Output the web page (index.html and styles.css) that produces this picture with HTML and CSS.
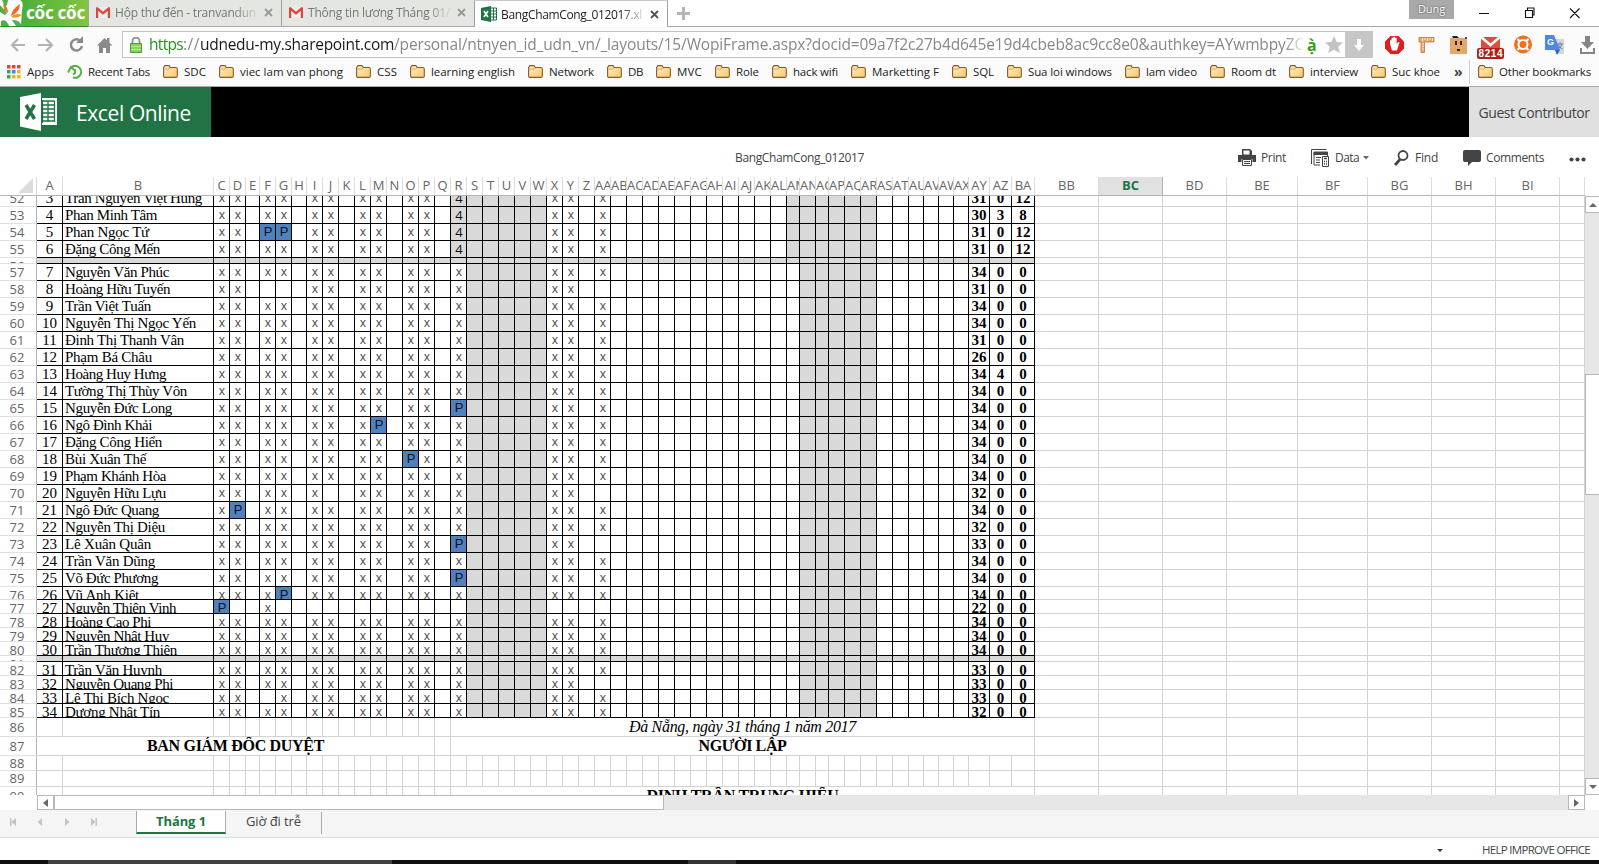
FILE: index.html
```html
<!DOCTYPE html>
<html lang="vi">
<head>
<meta charset="utf-8">
<title>BangChamCong_012017.xlsx</title>
<link rel="stylesheet" href="styles.css">
</head>
<body>
<svg class="defs" width="0" height="0">
  <linearGradient id="fold" x1="0" y1="0" x2="1" y2="1"><stop offset="0" stop-color="#fff0c4"/><stop offset="1" stop-color="#fbc56d"/></linearGradient>
  <symbol id="gmail" viewBox="0 0 14 11"><path d="M1 0h12v11H1z" fill="#ececec"/><path d="M0 1.4Q0 0 1.4 0L7 4.7 12.600 0Q14 0 14 1.400V11h-2.200V3.700L7 7.700 2.200 3.700V11H0z" fill="#d9483b"/></symbol>
  <symbol id="folder" viewBox="0 0 15 13"><path d="M.6 11V2.500L2 .6h4l1.300 1.900h5.500q1.500 0 1.500 1.500v7q0 1.400-1.400 1.400H2Q.6 12.400.6 11z" fill="url(#fold)" stroke="#8a5a2a" stroke-width="1.100"/><path d="M1.200 4h5l1-1" fill="none" stroke="#d09a50" stroke-width=".8"/></symbol>
  <symbol id="close" viewBox="0 0 9 9"><path d="M1 1l7 7M8 1L1 8" stroke="currentColor" stroke-width="1.900" fill="none"/></symbol>
</svg>

<header class="tabstrip">
  <div class="brand">
    <svg width="23" height="26" viewBox="0 0 23 26"><path d="M0 0h20q4 2 2 10l-1 16H0z" fill="#fff"/><path d="M2 0h6l-1 5-2 2z" fill="#4db048"/><path d="M0 5l7 8-2 2-5-3z" fill="#4db048"/><path d="M3 4q5 2 5 9l-4-3z" fill="#f07c22"/><path d="M20 4q0 8-9 12 1-7 9-12z" fill="#f26a21"/><path d="M22 15q-5 4-11 2 4-5 11-2z" fill="#f7941d"/><path d="M1 26v-5q5-3 8 5zM12 20q7-1 10 6h-6z" fill="#4db048"/></svg>
    <span class="brandname" data-w="59">cốc cốc</span>
  </div>
  <div class="tab"><svg width="14" height="11"><use href="#gmail"/></svg><span class="ttl"><b data-w="141">Hộp thư đến - tranvandun</b></span><svg class="x" width="9" height="9"><use href="#close"/></svg></div>
  <div class="tab"><svg width="14" height="11"><use href="#gmail"/></svg><span class="ttl"><b data-w="142">Thông tin lương Tháng 01/</b></span><svg class="x" width="9" height="9"><use href="#close"/></svg></div>
  <div class="tab on"><svg width="16" height="16" viewBox="0 0 16 16"><path d="M9 2h6.500v12H9z" fill="#fff" stroke="#217346"/><path d="M10 5h5M10 8h5M10 11h5M12.500 2v12" stroke="#217346"/><path d="M0 2l10-2v16L0 14z" fill="#217346"/><path d="M3 5l4 6M7 5l-4 6" stroke="#fff" stroke-width="1.600"/></svg><span class="ttl"><b data-w="141">BangChamCong_012017.xl</b></span><svg class="x" width="9" height="9"><use href="#close"/></svg></div>
  <svg class="plus" width="13" height="13"><path d="M6.500 0v13M0 6.500h13" stroke="#b4b4b4" stroke-width="3"/></svg>
  <div class="user" ><span data-w="27">Dung</span></div>
  <svg class="win" width="102" height="12" fill="none" stroke="#111" stroke-width="1.100"><path d="M0 6.500h10M46.500 3.500h7v7h-7zM48.500 3v-2h6.500v7h-1.500M91 1.500l9.500 9.500M100.500 1.500L91 11"/></svg>
</header>

<section class="navbar">
  <svg class="navicons" width="102" height="18" fill="none"><g stroke="#b3b3b3" stroke-width="2.200"><path d="M15 9H2M8 3L2 9l6 6M28 9h14M36 3l6 6-6 6"/></g><path d="M70 4.500a5.600 5.600 0 1 0 2 5.500" stroke="#8a8a8a" stroke-width="2.500"/><path d="M66 7h7V0z" fill="#8a8a8a"/><path d="M87 9.500L94.500 2l2.500 2.300V2h2.500v4.800l3 2.700h-2.500V17h-4v-5h-3v5h-4V9.500z" fill="#8a8a8a"/></svg>
  <div class="url">
    <svg width="12" height="16" viewBox="0 0 12 16"><path d="M2.500 7V4a3.500 3.500 0 0 1 7 0v3" fill="none" stroke="#8e8e8e" stroke-width="1.800"/><path d="M.5 6.500h11v9H.5z" fill="#8bd25c" stroke="#4f9a33"/><path d="M1 9.500h10M1 12.500h10" stroke="#b5e796"/></svg>
    <div class="addr"><span class="sec" data-w="34">https</span><span data-w="17">://</span><span class="host" data-w="194">udnedu-my.sharepoint.com</span><span data-w="910">/personal/ntnyen_id_udn_vn/_layouts/15/WopiFrame.aspx?docid=09a7f2c27b4d645e19d4cbeb8ac9cc8e0&amp;authkey=AYwmbpyZC</span></div>
    <span class="viet">ạ̀</span>
    <svg width="18" height="17" viewBox="0 0 18 17"><path d="M9 0l2.700 5.900 6.300.6-4.700 4.200 1.400 6.300L9 13.700 3.300 17l1.400-6.300L0 6.500l6.300-.6z" fill="#c3c3c3"/></svg>
    <div class="dl"><svg width="10" height="12"><path d="M3 0h4v6h3l-5 6-5-6h3z" fill="#fff"/></svg></div>
  </div>
  <svg class="exts" width="213" height="27" viewBox="0 0 213 27">
    <path d="M5.500 5h8l5.500 5.500v7L13.500 23h-8L0 17.500v-7z" fill="#df1f1f"/><path d="M5 13V9.500q1-1 1.500 0V7q1-1.200 1.700 0V6q1-1.200 1.800 0v1q1-1 1.700 0v6l1.500-2q1.400-.4 1.200.8L12 19.500H7z" fill="#fff"/>
    <path d="M34 6.500h15V11h-9.500v10.500H36V11h-2z" fill="#e3a868" stroke="#b07a42" stroke-width=".8"/><path d="M37.500 7v3M40 7v2M42.500 7v3M45 7v2M47.500 7v3M37 13h2M37 15.500h2M37 18h2" stroke="#fff0d0" stroke-width=".9"/>
    <path d="M65 7h17v16H65z" fill="#e5a86b"/><path d="M67 5h5l2 2h-6z" fill="#14213d"/><path d="M70 10h2v4h-2zM75 10h2v4h-2zM72 18h3v2h-3z" fill="#3a2413"/><path d="M80 6h2v2h-2z" fill="#35508f"/>
    <path d="M96 6h19v14H96z" fill="#e04b3d"/><path d="M96 6l9.500 8L115 6" fill="none" stroke="#fff" stroke-width="2.500"/><rect x="92" y="17" width="27" height="11" rx="2" fill="#ad2018"/>
    <text class="badge" x="93.500" y="26" textLength="24">8214</text>
    <circle cx="138" cy="13.500" r="9" fill="#f0701f"/><circle cx="138" cy="13.500" r="4.500" fill="none" stroke="#fff" stroke-width="2"/><path d="M132.500 8l2.500 2.500M143.500 8L141 10.500M132.500 19l2.500-2.500M143.500 19l-2.500-2.500" stroke="#fff" stroke-width="2"/>
    <path d="M168 8h11v15h-8z" fill="#d6d6d6"/><path d="M160 4h9l6 15h-15z" fill="#4a86ee"/><path d="M170 19h5l-3 5z" fill="#2f62c0"/><text class="gt" x="162" y="14">G</text><path d="M172 13h6M175 11.500v1.500M173 18q3-2 4-5M173.500 14q1 3 4 4" stroke="#6d7f8c" fill="none"/>
    <path d="M200 5h5v6h4l-6.500 7-6.500-7h4zM195 17h2v4h11v-4h2v6h-15z" fill="#858585"/>
  </svg>
</section>

<nav class="bookmarks" id="bookmarks">
  <span class="bm apps"><svg width="14" height="14"><path d="M0 0h3.500v3.500H0zM5 0h3.500v3.500H5zM10 0h3.500v3.500H10z" fill="#e8453c"/><path d="M0 5h3.500v3.500H0z" fill="#3aa757"/><path d="M5 5h3.500v3.500H5z" fill="#4285f4"/><path d="M10 5h3.500v3.500H10zM5 10h3.500v3.500H5zM10 10h3.500v3.500H10z" fill="#f5b31a"/><path d="M0 10h3.500v3.500H0z" fill="#3aa757"/></svg><b data-w="27">Apps</b></span>
  <span class="bm"><svg width="15" height="14" fill="none" stroke="#4fae3c" stroke-width="1.900"><path d="M4 2.500A6 6 0 1 1 6 12.500M1 7.500L4 2l3 3M8 4v4l-2 1.500"/></svg><b data-w="62">Recent Tabs</b></span>
</nav>

<section class="suite">
  <div class="app">
    <svg width="37" height="38" viewBox="0 0 37 38"><path d="M22 5h15v27H22z" fill="#fff"/><path d="M23 8h11.500M23 12h11.500M23 16h11.500M23 20h11.500M23 24h11.500M23 28h11.500" stroke="#217346" stroke-width="1.300"/><path d="M28 8v21M22.500 7v23M34.500 8v21" stroke="#217346" stroke-width="1.300"/><path d="M0 4l21-4v38L0 33.500z" fill="#fff"/><path d="M6 12l8.500 14M14.500 12L6 26" stroke="#217346" stroke-width="3.400"/></svg>
    <span data-w="115">Excel Online</span>
  </div>
  <div class="guest"><span data-w="111">Guest Contributor</span></div>
</section>

<section class="cmdbar">
  <div class="fname"><span data-w="129">BangChamCong_012017</span></div>
  <div class="cmd"><svg width="18" height="17"><path d="M4 0h8l2 2v4H4zM0 6h18v7h-3.500v-3h-11v3H0z" fill="#444"/><path d="M5.500 1.500h6v4h-6z" fill="#fff"/><path d="M4.500 10.500h9v6h-9z" fill="#fff" stroke="#444"/><path d="M6 12.500h6M6 14.500h6" stroke="#444"/></svg><span data-w="25">Print</span></div>
  <div class="cmd data"><svg width="19" height="18" fill="none" stroke="#444"><path d="M.5 15V.500h15M3 16V3h13.500v4M3 16h6" /><path d="M3 3.500h13v2H3z" fill="#444"/><path d="M5 8.500h5M5 11h4M5 13.500h4"/><path d="M11.500 7.500h6v10h-6z" fill="#fff"/><path d="M13 9.500h3M13 12.500h1M15 12.500h1M13 15h1M15 15h1" stroke-width="1.400"/></svg><span data-w="24">Data</span><svg class="car" width="6" height="4"><path d="M0 0h6L3 3.500z" fill="#666"/></svg></div>
  <div class="cmd find"><svg width="15" height="16" fill="none" stroke="#444"><circle cx="9" cy="5.500" r="4.500" stroke-width="1.800"/><path d="M6 9.500L1 15" stroke-width="2.800"/></svg><span data-w="23">Find</span></div>
  <div class="cmd comm"><svg width="18" height="16"><path d="M2 0h14q2 0 2 2v8q0 2-2 2H9l-4 4v-4H2q-2 0-2-2V2q0-2 2-2z" fill="#444"/></svg><span data-w="58">Comments</span></div>
  <svg class="dots" width="17" height="5" fill="#444"><circle cx="2.500" cy="2.500" r="2.100"/><circle cx="8.500" cy="2.500" r="2.100"/><circle cx="14.500" cy="2.500" r="2.100"/></svg>
</section>

<main class="work">
  <div class="sheet">
    <div class="row heads" id="heads"></div>
    <div class="body" id="body"></div>
    <div class="hscroll">
      <i class="btn"><svg width="5" height="8"><path d="M5 0v8L0 4z" fill="#666"/></svg></i><i class="thumb"></i><i class="track"></i><i class="btn"><svg width="5" height="8"><path d="M0 0v8l5-4z" fill="#666"/></svg></i>
    </div>
  </div>
  <div class="vscroll">
    <i class="btn"><svg width="8" height="4"><path d="M4 0l4 4H0z" fill="#666"/></svg></i><i class="t1"></i><i class="thumb"></i><i class="track"></i><i class="btn"><svg width="8" height="4"><path d="M0 0h8L4 4z" fill="#666"/></svg></i>
  </div>
</main>

<footer class="sheets">
  <svg class="pager" width="97" height="8" fill="#c3c3c3"><path d="M10 0h1.500v8H10zM16 0v8l-4.500-4zM42 0v8l-4.500-4zM65 0v8l4.500-4zM91 0v8l4.500-4zM95.500 0H97v8h-1.500z"/></svg>
  <div class="sh on"><span data-w="50">Tháng 1</span></div>
  <div class="sh"><span data-w="55">Giờ đi trễ</span></div>
</footer>
<div class="status"><svg width="6" height="3"><path d="M0 0h6L3 3z" fill="#333"/></svg><span data-w="108">HELP IMPROVE OFFICE</span></div>
<div class="taskbar"><i></i><i></i></div>
<script src="app.js"></script>
</body>
</html>
```

FILE: styles.css
```css
* { box-sizing: border-box; }
body { margin: 0; width: 1599px; height: 864px; overflow: hidden; background: #fff; font-family: "Open Sans", "Noto Sans", sans-serif; font-size: 12px; color: #444; display: flex; flex-direction: column; }
b { font-weight: inherit; }
svg { flex: none; display: block; }
[data-w] { display: inline-block; white-space: pre; }
.defs { position: absolute; }

.tabstrip { height: 27px; display: flex; align-items: center; border-bottom: 1px solid #a9a9a9; flex: none; }
.brand { width: 88px; height: 27px; background: linear-gradient(90deg, #35a936, #85c440); display: flex; align-items: flex-start; gap: 3px; border-bottom: 1px solid #2f8c2f; }
.brandname { color: #fff; font-family: "Noto Sans", sans-serif; font-size: 17px; font-weight: 700; line-height: 26px; }
.tab { width: 193px; height: 27px; border-left: 1px solid #a0a0a0; border-bottom: 1px solid #a9a9a9; background: #e4e6e2; display: flex; align-items: center; padding-left: 7px; color: #777; }
.ttl { width: 142px; margin-left: 5px; overflow: hidden; white-space: nowrap; -webkit-mask-image: linear-gradient(90deg, #000 84%, rgba(0,0,0,.15)); }
.tab .x { margin-left: 7px; color: #999; }
.tab.on { background: #fff; border-right: 1px solid #a0a0a0; border-top: 1px solid #c8c8c8; border-bottom: 0; color: #222; padding-left: 6px; height: 28px; margin-top: 1px; width: 194px; }
.tab.on .ttl { margin-left: 4px; }
.tab.on .x { color: #555; }
.plus { margin-left: 9px; }
.user { width: 45px; height: 19px; margin-left: 719px; align-self: flex-start; background: #a9a9a9; color: #fff; text-align: center; line-height: 18px; font-size: 11px; text-shadow: 0 0 2px #333; }
.win { margin-left: 25px; }

.navbar { height: 32px; flex: none; display: flex; padding: 4px 0 0 10px; background: #fbfbfb; }
.navicons { margin-top: 5px; overflow: visible; }
.url { width: 1251px; height: 27px; margin-left: 10px; border: 1px solid #c3c3c3; background: #fff; display: flex; align-items: center; padding-left: 7px; }
.addr { width: 1153px; margin-left: 7px; height: 25px; line-height: 24px; font-size: 15.500px; color: #888; white-space: nowrap; overflow: hidden; -webkit-mask-image: linear-gradient(90deg, #000 98.500%, rgba(0,0,0,.2)); }
.sec { color: #1c9a1c; }
.host { color: #1a1a1a; }
.viet { width: 15px; margin-left: 5px; margin-right: 3px; color: #3c9b1c; font-weight: 700; font-size: 16px; line-height: 24px; }
.dl { width: 28px; height: 27px; margin: -1px -1px -1px auto; background: #c6c6c6; display: flex; align-items: center; justify-content: center; }
.exts { margin-left: 12px; overflow: visible; }
.badge { font: 700 10px "Liberation Sans", sans-serif; fill: #fff; }
.gt { font: 700 9px "Liberation Sans", sans-serif; fill: #fff; }

.bookmarks { height: 28px; flex: none; display: flex; align-items: center; padding: 0 8px 2px 7px; background: #fbfbfb; border-bottom: 1px solid #a9a9a9; color: #222; font-size: 11.500px; }
.bm { display: flex; align-items: center; gap: 6px; margin-right: 13px; white-space: nowrap; }
.bm b { margin-top: -1px; }
.more { margin-left: 1px; width: 17px; font-size: 14px; font-weight: 700; line-height: 14px; color: #444; }
.other { border-left: 1px solid #ccd4da; padding-left: 8px; height: 24px; margin: 0; }

.suite { height: 50px; flex: none; background: #000; display: flex; justify-content: space-between; }
.app { width: 211px; background: #217346; color: #fff; display: flex; align-items: center; padding-left: 20px; gap: 19px; font-size: 21px; }
.app span { margin-top: 2px; }
.guest { width: 130px; background: #e0e0e0; color: #444; display: flex; align-items: center; justify-content: center; padding: 1px 0 0; font-size: 14px; }

.cmdbar { height: 40px; flex: none; display: flex; align-items: center; padding: 1px 0 0 735px; }
.fname { width: 503px; }
.cmd { display: flex; align-items: center; gap: 5px; margin-right: 25px; }
.data .car { margin-left: -1px; }
.cmd.find { gap: 6px; }
.dots { margin-top: 3px; }

.work { display: flex; height: 633px; flex: none; }
.sheet { width: 1585px; display: flex; flex-direction: column; }
.row { display: grid; flex: none; }
.heads { height: 19px; border-bottom: 1px solid #b4b4b4; font-size: 13px; color: #666; line-height: 17px; }
.heads > div { border-right: 1px solid #dcdcdc; overflow: hidden; display: flex; justify-content: safe center; white-space: nowrap; }
.heads > .sel { background: #e1e1e1; color: #217346; font-weight: 700; border-color: #b4b4b4; }
.heads > .corner { justify-content: flex-end; align-items: flex-end; padding: 0 3px 2px 0; }
.body { height: 599px; overflow: hidden; flex: none; }
.body .row > div { border-right: 1px solid #d3d3d3; border-bottom: 1px solid #d3d3d3; overflow: hidden; white-space: nowrap; text-align: center; line-height: 17px; }
.body .row > .n { border-right-color: #b4b4b4; border-bottom-color: #e1e1e1; color: #666; font-size: 13px; padding-right: 2px; display: flex; align-items: center; justify-content: center; }
.body .short > .n { align-items: flex-start; }
.row.first > div > span { position: relative; top: -6px; }
.body .row > .k { border-color: #000; }
.row > .g { background: #d9d9d9; }
.row > .a, .row > .nm, .row > .t { font-family: "Liberation Serif", serif; font-size: 15px; color: #000; }
.row > .t { font-weight: 700; }
.body .row > .nm { text-align: left; padding-left: 2px; }
.body .row > .m { font-size: 12px; color: #444; line-height: 15px; padding-left: 1px; }
.body .row > .p { font-family: "Liberation Sans", sans-serif; font-size: 13px; color: #101020; background: #4f81bd; line-height: 16px; padding-left: 1px; }
.body .row > .four { color: #111; font-size: 13px; line-height: 16px; padding-left: 1px; }
.body .row > .mg { font-family: "Liberation Serif", serif; font-size: 16px; color: #000; }
.mg.bold { font-weight: 700; }
.mg.it { font-style: italic; }

.hscroll { display: flex; height: 15px; margin-left: 37px; }
.btn { display: flex; align-items: center; justify-content: center; background: #fff; border: 1px solid #b8b8b8; flex: none; width: 17px; }
.hscroll .thumb { width: 610px; background: #fff; border: 1px solid #b8b8b8; }
.track { background: #e6e6e6; flex: 1; }
.vscroll { width: 14px; display: flex; flex-direction: column; padding: 19px 0 15px; }
.vscroll .btn { width: 15px; height: 17px; }
.t1 { height: 161px; background: #e6e6e6; }
.vscroll .thumb { height: 121px; width: 15px; background: #fff; border: 1px solid #b8b8b8; }

.sheets { height: 28px; flex: none; background: #f5f5f5; border-bottom: 1px solid #dedede; display: flex; }
.pager { margin-top: 8px; }
.sh { height: 22px; margin-top: 2px; width: 96px; border-right: 1px solid #ababab; font-size: 13px; line-height: 19px; padding-left: 20px; }
.sh.on { margin-left: 39px; margin-top: 1px; height: 23px; width: 90px; background: #fff; border-left: 1px solid #ababab; border-bottom: 2px solid #217346; color: #217346; font-weight: 700; padding-left: 19px; line-height: 21px; }
.status { height: 22px; flex: none; display: flex; align-items: center; padding: 2px 0 0 1437px; gap: 39px; font-size: 11.500px; line-height: 16px; }
.taskbar { height: 4px; background: #101010; display: flex; flex: none; }
.taskbar i { width: 344px; margin-left: 48px; background: #404040; }
.taskbar i + i { width: 48px; margin-left: 296px; background: #333; }
```

FILE: app.js
```js
// Bookmark folders: label and label width
const folders = [['SDC',22],['viec lam van phong',103],['CSS',20],['learning english',84],['Network',45],['DB',15],['MVC',25],['Role',23],['hack wifi',45],['Marketting F',67],['SQL',21],['Sua loi windows',84],['lam video',51],['Room dt',45],['interview',48],['Suc khoe',48]];
const folderSvg = '<svg width="15" height="13"><use href="#folder"/></svg>';
document.getElementById('bookmarks').insertAdjacentHTML('beforeend',
  folders.map(([t, w]) => `<span class="bm">${folderSvg}<b data-w="${w}">${t}</b></span>`).join('') +
  `<span class="more">»</span><span class="bm other">${folderSvg}<b data-w="92">Other bookmarks</b></span>`);

// Right edge of every column, starting with the row-number gutter
const edges = [37,63,214,230,246,260,276,292,307,323,339,355,371,387,403,419,435,451,467,483,499,515,531,547,563,579,595,611,627,643,659,675,691,707,723,739,755,771,787,800,816,829,845,861,877,893,909,924,939,954,969,990,1012,1035,1099,1163,1227,1298,1368,1432,1496,1560,1585];
const widths = edges.map((e, i) => e - (i ? edges[i - 1] : 0));
const cols = widths.map(w => w + 'px').join(' ');
const name = i => { let s = ''; for (i++; i > 0; i = Math.floor((i - 1) / 26)) s = String.fromCharCode(65 + (i - 1) % 26) + s; return s; };
const count = edges.length - 1;
const idx = {};
for (let i = 0; i < count; i++) idx[name(i)] = i;

const heads = document.getElementById('heads');
heads.style.gridTemplateColumns = cols;
let h = '<div class="corner"><svg width="15" height="15"><path d="M15 0v15H0z" fill="#dcdcdc"/></svg></div>';
for (let i = 0; i < count; i++) h += `<div class="${name(i) === 'BC' ? 'sel' : ''}">${i < count - 1 ? name(i) : ''}</div>`;
heads.innerHTML = h;

// [row, height, number, name, name width, AY, AZ, BA, columns without a mark, columns marked P]
const rows = [
  [52,11,3,'Trần Nguyễn Việt Hùng',137,31,0,12,'',''],
  [53,17,4,'Phan Minh Tâm',92,30,3,8,'',''],
  [54,17,5,'Phan Ngọc Tứ',84,31,0,12,'','F G'],
  [55,17,6,'Đặng Công Mến',95,31,0,12,'',''],
  [56,6],
  [57,17,7,'Nguyễn Văn Phúc',104,34,0,0,'',''],
  [58,17,8,'Hoàng Hữu Tuyến',105,31,0,0,'F G AA',''],
  [59,17,9,'Trần Việt Tuấn',86,34,0,0,'',''],
  [60,17,10,'Nguyễn Thị Ngọc Yến',131,34,0,0,'',''],
  [61,17,11,'Đinh Thị Thanh Vân',119,31,0,0,'',''],
  [62,17,12,'Phạm Bá Châu',87,26,0,0,'',''],
  [63,17,13,'Hoàng Huy Hưng',101,34,4,0,'',''],
  [64,17,14,'Tường Thị Thùy Vôn',122,34,0,0,'',''],
  [65,17,15,'Nguyễn Đức Long',107,34,0,0,'','R'],
  [66,17,16,'Ngô Đình Khải',87,34,0,0,'','M'],
  [67,17,17,'Đặng Công Hiển',97,34,0,0,'',''],
  [68,17,18,'Bùi Xuân Thế',81,34,0,0,'','O'],
  [69,17,19,'Phạm Khánh Hòa',101,34,0,0,'',''],
  [70,17,20,'Nguyễn Hữu Lựu',101,32,0,0,'J AA',''],
  [71,17,21,'Ngô Đức Quang',94,34,0,0,'','D'],
  [72,17,22,'Nguyễn Thị Diệu',100,32,0,0,'',''],
  [73,17,23,'Lê Xuân Quân',86,33,0,0,'AA','R'],
  [74,17,24,'Trần Văn Dũng',90,34,0,0,'',''],
  [75,17,25,'Võ Đức Phương',93,34,0,0,'','R'],
  [76,13,26,'Vũ Anh Kiệt',74,34,0,0,'','G'],
  [77,14,27,'Nguyễn Thiện Vinh',111,22,0,0,'D G I J L M O P R X Y AA','C'],
  [78,14,28,'Hoàng Cao Phi',86,34,0,0,'',''],
  [79,14,29,'Nguyễn Nhật Huy',104,34,0,0,'',''],
  [80,14,30,'Trần Thượng Thiên',112,34,0,0,'',''],
  [81,6],
  [82,14,31,'Trần Văn Huynh',97,33,0,0,'',''],
  [83,14,32,'Nguyễn Quang Phi',108,33,0,0,'AA',''],
  [84,14,33,'Lê Thị Bích Ngọc',104,33,0,0,'F',''],
  [85,14,34,'Dương Nhật Tín',95,32,0,0,'','']
];
const marked = 'C D F G I J L M O P R X Y AA'.split(' ');
const between = (i, a, b) => i >= idx[a] && i <= idx[b];
const open = (height, n, cls = '') => `<div class="row ${cls}${height < 15 ? ' short' : ''}" style="height:${height}px;grid-template-columns:${cols}"><div class="n"><span>${n}</span></div>`;
const cell = (cls, t = '', span = 1) => `<div class="${cls}"${span > 1 ? ` style="grid-column:span ${span}"` : ''}>${t}</div>`;

let out = '';
for (const [n, height, num, who, w, ay, az, ba, skip, ps] of rows) {
  out += open(height, n, n === 52 ? 'first' : '');
  for (let i = 0; i < count; i++) {
    const c = name(i);
    if (i > idx.BA) out += cell('');
    else if (num === undefined) out += cell('k g');
    else if (c === 'A') out += cell('k a', `<span>${num}</span>`);
    else if (c === 'B') out += cell('k nm', `<span data-w="${w}">${who}</span>`);
    else if (c === 'AY') out += cell('k t', `<span>${ay}</span>`);
    else if (c === 'AZ') out += cell('k t', `<span>${az}</span>`);
    else if (c === 'BA') out += cell('k t', `<span>${ba}</span>`);
    else if (ps.split(' ').includes(c)) out += cell('k p', '<span>P</span>');
    else if (c === 'R' && n < 56) out += cell('k g four', '<span>4</span>');
    else if (between(i, 'S', 'W') || between(i, n < 56 ? 'AM' : 'AN', 'AR')) out += cell('k g');
    else if (marked.includes(c) && !skip.split(' ').includes(c)) out += cell('k m', '<span>x</span>');
    else out += cell('k');
  }
  out += '</div>';
}
const blanks = k => cell('').repeat(k);
const right = idx.BA - idx.R + 1, rest = count - 1 - idx.BA;
out += open(19, 86) + blanks(idx.R) + cell('mg it', '<span data-w="227">Đà Nẵng, ngày 31 tháng 1 năm 2017</span>', right) + blanks(rest) + '</div>';
out += open(19, 87) + cell('mg bold', '<span data-w="177">BAN GIÁM ĐỐC DUYỆT</span>', idx.Q) + blanks(1) + cell('mg bold', '<span data-w="88">NGƯỜI LẬP</span>', right) + blanks(rest) + '</div>';
out += open(15, 88) + blanks(count) + '</div>';
out += open(16, 89) + blanks(count) + '</div>';
out += open(19, 90) + blanks(idx.R) + cell('mg bold', '<span data-w="192">ĐINH TRẦN TRUNG HIẾU</span>', right) + blanks(rest) + '</div>';
document.getElementById('body').innerHTML = out;

// Track each label to its set width
document.querySelectorAll('[data-w]').forEach(el => {
  const natural = el.getBoundingClientRect().width;
  el.style.letterSpacing = ((+el.dataset.w - natural) / [...el.textContent].length).toFixed(3) + 'px';
});
```
